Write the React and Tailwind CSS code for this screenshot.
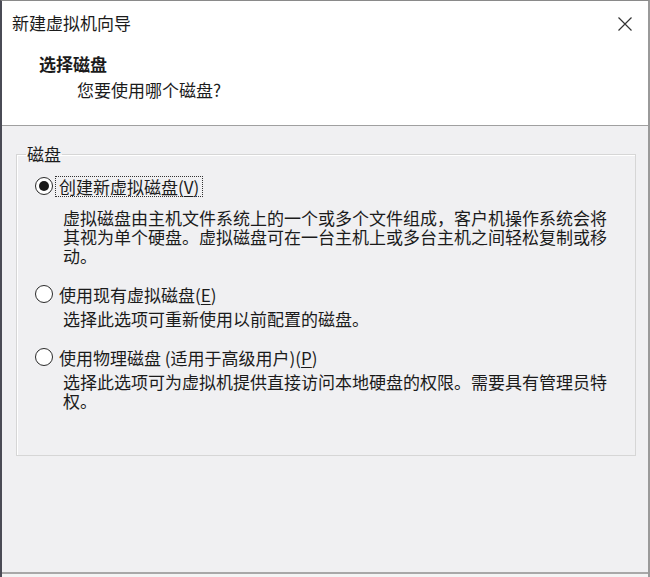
import React from "react";

const font = { fontFamily: '"Noto Sans CJK SC", "Noto Sans", sans-serif' };

function Radio({ checked }) {
  return (
    <span className="flex h-[18px] w-[18px] shrink-0 items-center justify-center rounded-full border-[1.5px] border-[#2a2a2a] bg-white">
      {checked && <span className="h-[10px] w-[10px] rounded-full bg-[#1a1a1a]" />}
    </span>
  );
}

function Option({ checked, focused, label, hotkey, desc, descTop }) {
  return (
    <div>
      <div className="flex h-5 items-center">
        <div className="ml-[18px]">
          <Radio checked={checked} />
        </div>
        <span
          className={
            "ml-[2px] px-[3px] leading-[19px] " +
            (focused ? "border border-dotted border-[#333]" : "border border-transparent")
          }
        >
          {label}(<span className="underline underline-offset-2">{hotkey}</span>)
        </span>
      </div>
      <p className={"ml-[46px] w-[550px] leading-[19px] " + descTop}>{desc}</p>
    </div>
  );
}

export default function App() {
  return (
    <div
      className="relative flex h-[577px] w-[650px] flex-col overflow-hidden border-l-2 border-t border-r-2 border-l-[#4a4b55] border-t-[#8a8a8a] border-r-[#9a9a9a] bg-[#f0f0f2] text-[17px] text-[#1b1b1b]"
      style={font}
    >
      <div className="h-[125px] shrink-0 border-b border-[#a0a0a0] bg-white">
        <div className="flex items-center justify-between pl-[10px] pr-[16px] pt-[12px]">
          <span className="leading-5">新建虚拟机向导</span>
          <svg width="14" height="14" viewBox="0 0 14 14" className="mt-[1px]">
            <path d="M0.5 0.5 L13.5 13.5 M13.5 0.5 L0.5 13.5" stroke="#333" strokeWidth="1.2" fill="none" />
          </svg>
        </div>
        <div className="ml-[37px] mt-[21px] font-bold leading-5">选择磁盘</div>
        <div className="ml-[75px] mt-[6px] leading-5">您要使用哪个磁盘?</div>
      </div>

      <div className="flex-1 pl-[14px] pt-[18px]">
        <fieldset className="h-[312px] w-[620px] border border-[#d6d6d6] p-0 shadow-[inset_1px_1px_0_#fff]">
          <legend className="ml-[9px] px-[1px] leading-5">磁盘</legend>
          <div className="pt-[12px]">
            <Option
              checked
              focused
              label="创建新虚拟磁盘"
              hotkey="V"
              descTop="mt-[12px]"
              desc="虚拟磁盘由主机文件系统上的一个或多个文件组成，客户机操作系统会将其视为单个硬盘。虚拟磁盘可在一台主机上或多台主机之间轻松复制或移动。"
            />
            <div className="mt-[19px]">
              <Option
                label="使用现有虚拟磁盘"
                hotkey="E"
                descTop="mt-[5px]"
                desc="选择此选项可重新使用以前配置的磁盘。"
              />
            </div>
            <div className="mt-[19px]">
              <Option
                label="使用物理磁盘 (适用于高级用户)"
                hotkey="P"
                descTop="mt-[5px]"
                desc="选择此选项可为虚拟机提供直接访问本地硬盘的权限。需要具有管理员特权。"
              />
            </div>
          </div>
        </fieldset>
      </div>

      <div className="h-[5px] shrink-0 border-t-2 border-[#a8a8a8] bg-[#f4f4f4]" />
    </div>
  );
}
